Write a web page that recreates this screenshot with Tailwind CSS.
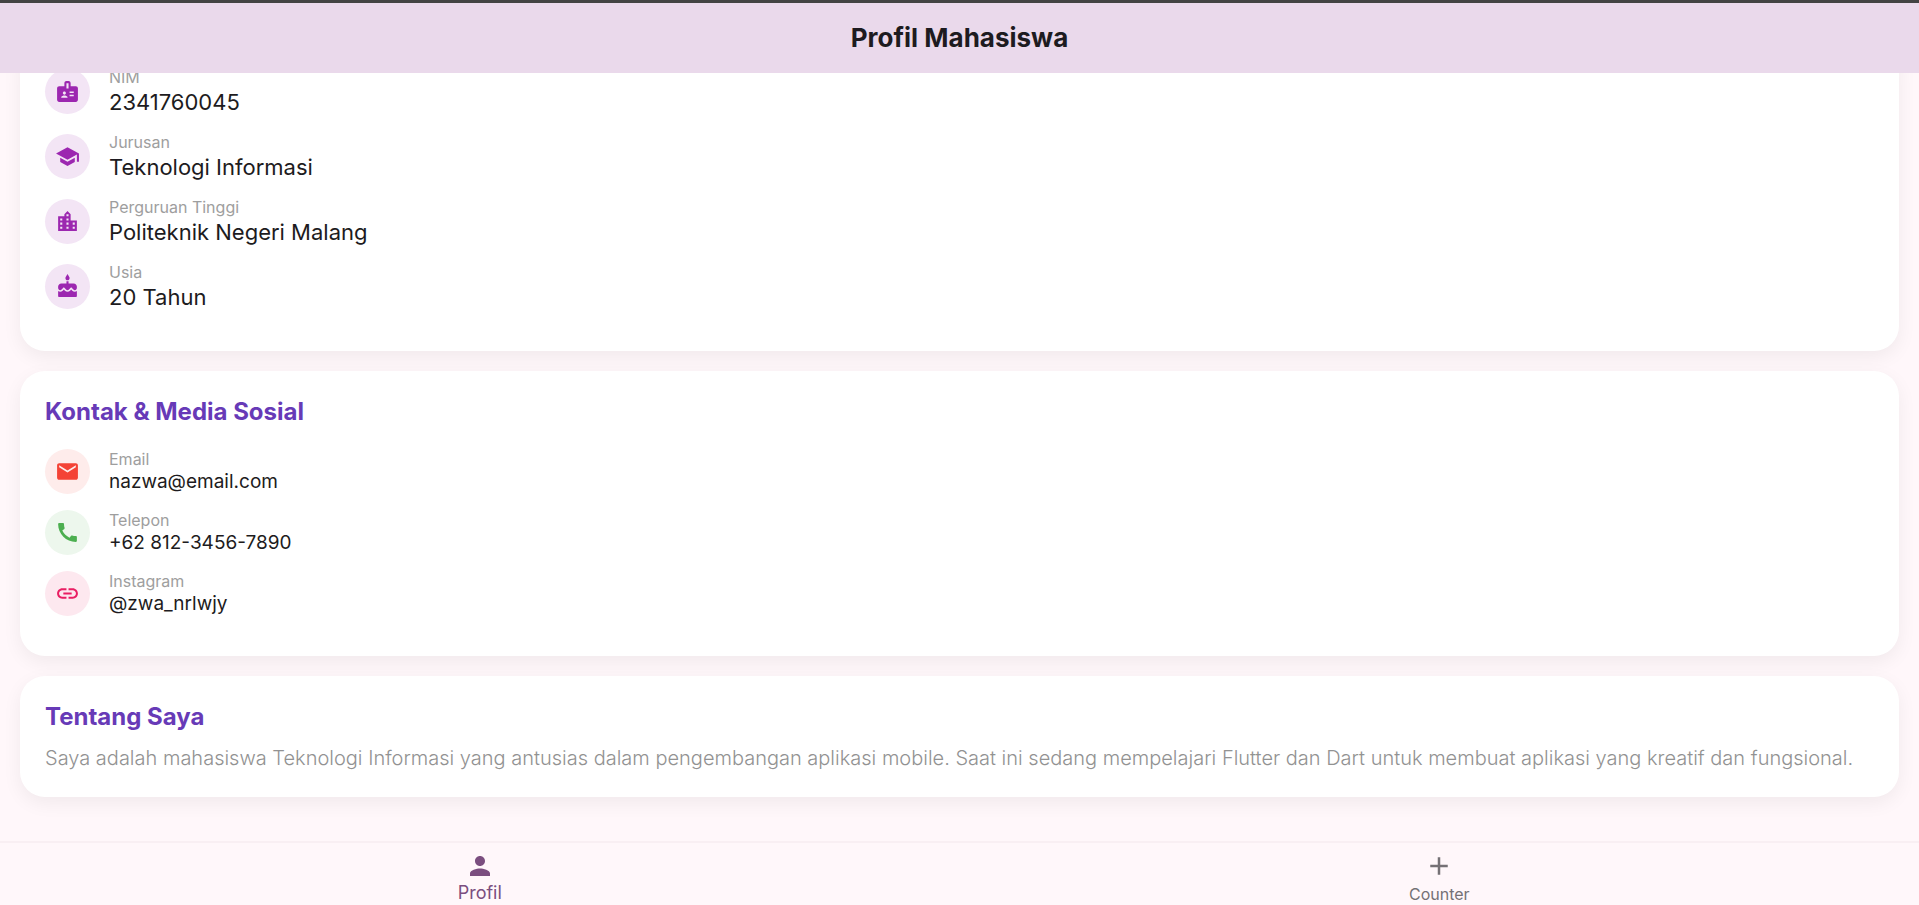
<!DOCTYPE html>
<html lang="id">
<head>
<meta charset="utf-8">
<meta name="viewport" content="width=device-width, initial-scale=1">
<title>Profil Mahasiswa</title>
<script src="https://cdn.jsdelivr.net/npm/@tailwindcss/browser@4"></script>
</head>
<body class="flex h-screen flex-col overflow-hidden bg-[#fff7fa] font-['Inter','Noto_Sans',sans-serif] text-[#1d1b20]">

<header class="flex h-[73px] shrink-0 items-center justify-center border-t-3 border-[#434343] bg-[#ead9eb]">
  <h1 class="text-[26px] font-bold leading-8">Profil Mahasiswa</h1>
</header>

<main class="flex min-h-0 flex-1 flex-col justify-end gap-5 overflow-hidden px-5 pb-11">

  <section aria-label="Informasi" class="shrink-0 rounded-[25px] bg-white px-[25px] pb-10 pt-[25px] shadow-[0_6px_19px_rgba(0,0,0,0.06)]">
    <dl class="flex flex-col gap-[15px]">
      <div class="flex items-center gap-[19px]">
        <span class="flex size-[45px] items-center justify-center rounded-full bg-[#f3e5f5] text-[#9c27b0]">
          <svg class="size-[25px]" viewBox="0 0 24 24" fill="currentColor" aria-hidden="true"><path d="M20 7h-5V4c0-1.1-.9-2-2-2h-2c-1.1 0-2 .9-2 2v3H4c-1.1 0-2 .9-2 2v11c0 1.1.9 2 2 2h16c1.1 0 2-.9 2-2V9c0-1.1-.9-2-2-2zM9 12c.83 0 1.5.67 1.5 1.5S9.83 15 9 15s-1.5-.67-1.5-1.5S8.17 12 9 12zm3 6H6v-.75c0-1 2-1.5 3-1.5s3 .5 3 1.5V18zm1-9h-2V4h2v5zm5 7.5h-4V15h4v1.5zm0-3h-4V12h4v1.5z"/></svg>
        </span>
        <div>
          <dt class="text-base leading-[22px] text-[#9e9e9e]">NIM</dt>
          <dd class="text-[22px] leading-7">2341760045</dd>
        </div>
      </div>
      <div class="flex items-center gap-[19px]">
        <span class="flex size-[45px] items-center justify-center rounded-full bg-[#f3e5f5] text-[#9c27b0]">
          <svg class="size-[25px]" viewBox="0 0 24 24" fill="currentColor" aria-hidden="true"><path d="M5 13.18v4L12 21l7-3.82v-4L12 17l-7-3.82zM12 3L1 9l11 6 9-4.91V17h2V9L12 3z"/></svg>
        </span>
        <div>
          <dt class="text-base leading-[22px] text-[#9e9e9e]">Jurusan</dt>
          <dd class="text-[22px] leading-7">Teknologi Informasi</dd>
        </div>
      </div>
      <div class="flex items-center gap-[19px]">
        <span class="flex size-[45px] items-center justify-center rounded-full bg-[#f3e5f5] text-[#9c27b0]">
          <svg class="size-[25px]" viewBox="0 0 24 24" fill="currentColor" aria-hidden="true"><path d="M15 11V5l-3-3-3 3v2H3v14h18V11h-6zm-8 8H5v-2h2v2zm0-4H5v-2h2v2zm0-4H5V9h2v2zm6 8h-2v-2h2v2zm0-4h-2v-2h2v2zm0-4h-2V9h2v2zm0-4h-2V5h2v2zm6 12h-2v-2h2v2zm0-4h-2v-2h2v2z"/></svg>
        </span>
        <div>
          <dt class="text-base leading-[22px] text-[#9e9e9e]">Perguruan Tinggi</dt>
          <dd class="text-[22px] leading-7">Politeknik Negeri Malang</dd>
        </div>
      </div>
      <div class="flex items-center gap-[19px]">
        <span class="flex size-[45px] items-center justify-center rounded-full bg-[#f3e5f5] text-[#9c27b0]">
          <svg class="size-[25px]" viewBox="0 0 24 24" fill="currentColor" aria-hidden="true"><path d="M12 6c1.11 0 2-.9 2-2 0-.38-.1-.73-.29-1.03L12 0l-1.71 2.97c-.19.3-.29.65-.29 1.03 0 1.1.9 2 2 2zm4.6 9.99l-1.07-1.07-1.08 1.07c-1.3 1.3-3.58 1.31-4.89 0l-1.07-1.07-1.09 1.07C6.75 16.64 5.88 17 4.96 17c-.73 0-1.4-.23-1.96-.61V21c0 .55.45 1 1 1h16c.55 0 1-.45 1-1v-4.61c-.56.38-1.23.61-1.96.61-.92 0-1.79-.36-2.44-1.01zM18 9h-5V7h-2v2H6c-1.66 0-3 1.34-3 3v1.54c0 1.08.88 1.96 1.96 1.96.52 0 1.02-.2 1.38-.57l2.14-2.13 2.13 2.13c.74.74 2.03.74 2.77 0l2.14-2.13 2.13 2.13c.37.37.86.57 1.38.57 1.08 0 1.96-.88 1.96-1.96V12C21 10.34 19.66 9 18 9z"/></svg>
        </span>
        <div>
          <dt class="text-base leading-[22px] text-[#9e9e9e]">Usia</dt>
          <dd class="text-[22px] leading-7">20 Tahun</dd>
        </div>
      </div>
    </dl>
  </section>

  <section class="shrink-0 rounded-[25px] bg-white px-[25px] pb-10 pt-[25px] shadow-[0_6px_19px_rgba(0,0,0,0.06)]">
    <h2 class="mb-5 text-[24px] font-bold leading-8 text-[#673ab7]">Kontak &amp; Media Sosial</h2>
    <dl class="flex flex-col gap-[15px]">
      <div class="flex items-center gap-[19px]">
        <span class="flex size-[45px] items-center justify-center rounded-full bg-[#feeceb] text-[#f44336]">
          <svg class="size-[25px]" viewBox="0 0 24 24" fill="currentColor" aria-hidden="true"><path d="M20 4H4c-1.1 0-1.99.9-1.99 2L2 18c0 1.1.9 2 2 2h16c1.1 0 2-.9 2-2V6c0-1.1-.9-2-2-2zm0 4l-8 5-8-5V6l8 5 8-5v2z"/></svg>
        </span>
        <div>
          <dt class="text-base leading-[22px] text-[#9e9e9e]">Email</dt>
          <dd class="text-[19px] leading-6">nazwa@email.com</dd>
        </div>
      </div>
      <div class="flex items-center gap-[19px]">
        <span class="flex size-[45px] items-center justify-center rounded-full bg-[#edf7ed] text-[#4caf50]">
          <svg class="size-[25px]" viewBox="0 0 24 24" fill="currentColor" aria-hidden="true"><path d="M20.01 15.38c-1.23 0-2.42-.2-3.53-.56-.35-.12-.74-.03-1.01.24l-1.57 1.97c-2.83-1.35-5.48-3.9-6.89-6.83l1.95-1.66c.27-.28.35-.67.24-1.02-.37-1.11-.56-2.3-.56-3.53 0-.54-.45-.99-.99-.99H4.19C3.65 3 3 3.24 3 3.99 3 13.28 10.73 21 20.01 21c.71 0 .99-.63.99-1.18v-3.45c0-.54-.45-.99-.99-.99z"/></svg>
        </span>
        <div>
          <dt class="text-base leading-[22px] text-[#9e9e9e]">Telepon</dt>
          <dd class="text-[19px] leading-6">+62 812-3456-7890</dd>
        </div>
      </div>
      <div class="flex items-center gap-[19px]">
        <span class="flex size-[45px] items-center justify-center rounded-full bg-[#fde8ef] text-[#e91e63]">
          <svg class="size-[25px]" viewBox="0 0 24 24" fill="currentColor" aria-hidden="true"><path d="M3.9 12c0-1.71 1.39-3.1 3.1-3.1h4V7H7c-2.76 0-5 2.24-5 5s2.24 5 5 5h4v-1.9H7c-1.71 0-3.1-1.39-3.1-3.1zM8 13h8v-2H8v2zm9-6h-4v1.9h4c1.71 0 3.1 1.39 3.1 3.1s-1.39 3.1-3.1 3.1h-4V17h4c2.76 0 5-2.24 5-5s-2.24-5-5-5z"/></svg>
        </span>
        <div>
          <dt class="text-base leading-[22px] text-[#9e9e9e]">Instagram</dt>
          <dd class="text-[19px] leading-6">@zwa_nrlwjy</dd>
        </div>
      </div>
    </dl>
  </section>

  <section class="shrink-0 rounded-[25px] bg-white p-[25px] shadow-[0_6px_19px_rgba(0,0,0,0.06)]">
    <h2 class="mb-3 text-[24px] font-bold leading-8 text-[#673ab7]">Tentang Saya</h2>
    <p class="text-[20px] font-light leading-[27px] text-[#929292]">Saya adalah mahasiswa Teknologi Informasi yang antusias dalam pengembangan aplikasi mobile. Saat ini sedang mempelajari Flutter dan Dart untuk membuat aplikasi yang kreatif dan fungsional.</p>
  </section>
</main>

<nav aria-label="Navigasi utama" class="grid h-16 shrink-0 grid-cols-2 overflow-hidden border-t-2 border-[#f9eff3] bg-[#fff7fa]">
  <a href="#profil" aria-current="page" class="flex flex-col items-center pt-2 text-[#7b4e7f]">
    <svg class="size-[30px] shrink-0" viewBox="0 0 24 24" fill="currentColor" aria-hidden="true"><path d="M12 12c2.21 0 4-1.79 4-4s-1.79-4-4-4-4 1.79-4 4 1.79 4 4 4zm0 2c-2.67 0-8 1.34-8 4v2h16v-2c0-2.66-5.33-4-8-4z"/></svg>
    <span class="text-lg leading-6">Profil</span>
  </a>
  <a href="#counter" class="flex flex-col items-center pt-2 text-[#757175]">
    <svg class="size-[30px] shrink-0" viewBox="0 0 24 24" fill="currentColor" aria-hidden="true"><path d="M19 13h-6v6h-2v-6H5v-2h6V5h2v6h6v2z"/></svg>
    <span class="pt-0.5 text-base leading-[22px]">Counter</span>
  </a>
</nav>
</body>
</html>
